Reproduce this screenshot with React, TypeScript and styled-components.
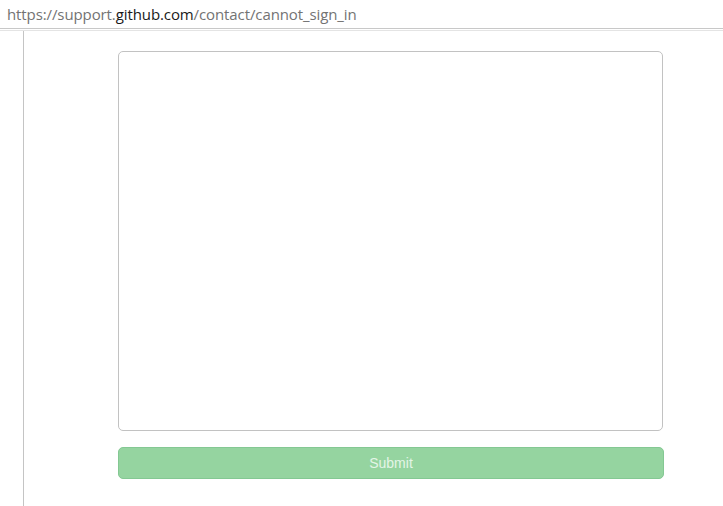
import React from "react";
import styled, { createGlobalStyle } from "styled-components";

const Global = createGlobalStyle`
  html, body { margin: 0; padding: 0; background: #fff; }
  body { width: 723px; height: 506px; overflow: hidden; }
`;

const Page = styled.div`
  display: flex;
  flex-direction: column;
  width: 723px;
  height: 506px;
  background: #fff;
`;

const AddressBar = styled.div`
  height: 29px;
  box-sizing: border-box;
  padding: 4px 0 0 7px;
  font-family: "Open Sans", sans-serif;
  font-size: 15px;
  letter-spacing: -0.1px;
  line-height: 20px;
  color: #737373;
  border-bottom: 1px solid #c8c8c8;
  white-space: nowrap;
`;

const Host = styled.span`
  color: #1a1a1a;
`;

const Rule = styled.div`
  height: 1px;
  margin-top: 1px;
  background: #e4e4e4;
`;

const Body = styled.div`
  flex: 1;
  display: flex;
`;

const Gutter = styled.div`
  width: 23px;
  border-right: 1px solid #c4c4c4;
`;

const Form = styled.form`
  display: flex;
  flex-direction: column;
  gap: 16px;
  padding: 20px 0 0 94px;
  width: 546px;
`;

const TextArea = styled.textarea`
  display: block;
  width: 545px;
  height: 380px;
  box-sizing: border-box;
  border: 1px solid #c2c2c2;
  border-radius: 5px;
  background: #fff;
  resize: none;
  outline: none;
  margin: 0;
`;

const SubmitButton = styled.button`
  width: 546px;
  height: 32px;
  box-sizing: border-box;
  border: 1px solid #84c893;
  border-radius: 5px;
  background: #95d4a0;
  color: #e4f5e7;
  font-family: "Liberation Sans", Arial, sans-serif;
  font-size: 14px;
  padding: 0;
  cursor: default;
`;

export default function App() {
  return (
    <Page>
      <Global />
      <AddressBar>
        https://support.<Host>github.com</Host>/contact/cannot_sign_in
      </AddressBar>
      <Rule />
      <Body>
        <Gutter />
        <Form onSubmit={(e) => e.preventDefault()}>
          <TextArea />
          <SubmitButton type="submit" disabled>
            Submit
          </SubmitButton>
        </Form>
      </Body>
    </Page>
  );
}
